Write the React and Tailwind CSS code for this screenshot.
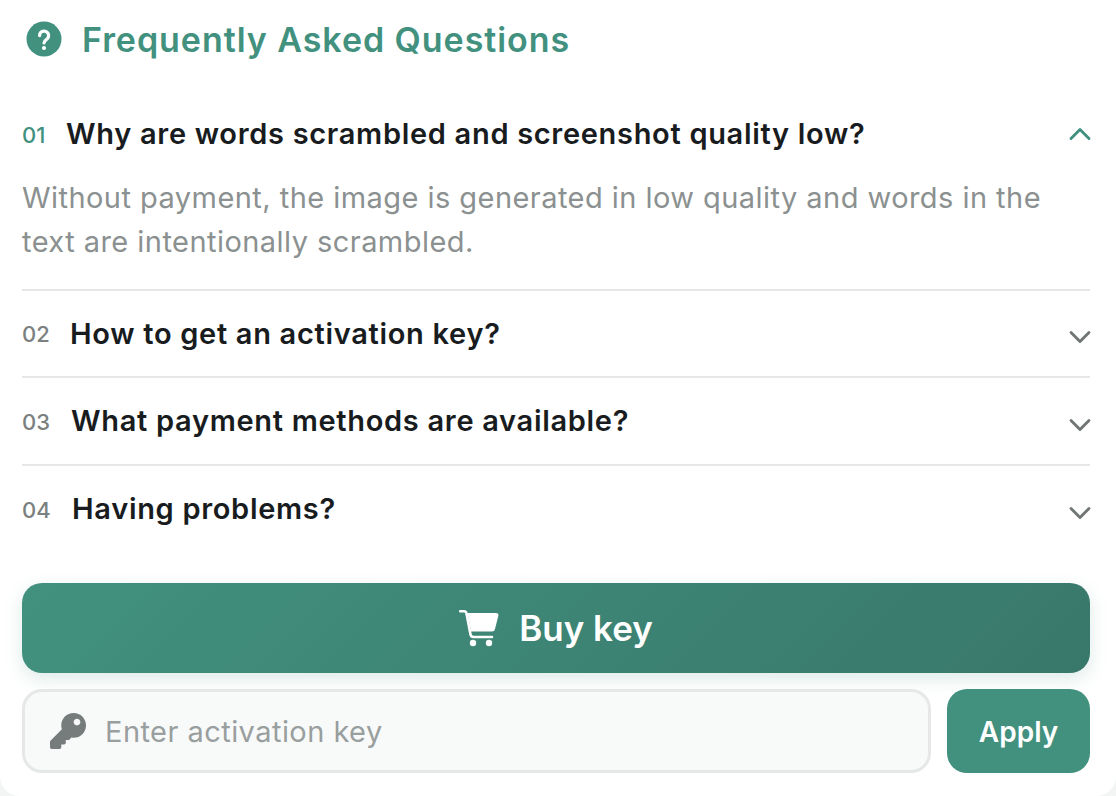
import React from 'react';
import { FaKey } from 'react-icons/fa';
import { LuChevronUp, LuChevronDown } from 'react-icons/lu';

const font = 'font-["Inter","Noto_Sans",sans-serif]';

const faqs = [
  { id: '02', question: 'How to get an activation key?', numWidth: 'w-[48px]', height: 'h-[87px]' },
  { id: '03', question: 'What payment methods are available?', numWidth: 'w-[49px]', height: 'h-[88px]' },
  { id: '04', question: 'Having problems?', numWidth: 'w-[50px]', height: 'h-[88px]' },
];

const QuestionIcon = () => (
  <svg className="w-[36px] h-[36px] flex-none" viewBox="0 0 36 36">
    <circle cx="18" cy="18" r="17.5" fill="#42917f" />
    <path
      d="M13.6 14.6a4.5 4.5 0 1 1 7 3.7c-1.6 1.1-2.6 2-2.6 3.6"
      fill="none"
      stroke="#fff"
      strokeWidth="3.2"
      strokeLinecap="round"
    />
    <circle cx="18" cy="27" r="2.1" fill="#fff" />
  </svg>
);

const CartIcon = () => (
  <svg className="w-[40px] h-[40px] flex-none" viewBox="0 0 40 40" fill="#fff">
    <path
      d="M1.2 3.2H5Q7 3.200 7.500 5.500L11.500 26.500Q12 29 14.500 29H33"
      fill="none"
      stroke="#fff"
      strokeWidth="2.6"
      strokeLinecap="round"
    />
    <path d="M8.500 5H37Q40 5 39.300 8L36 21Q35.500 23.500 33 23.500H12Z" />
    <circle cx="14" cy="35" r="3.200" />
    <circle cx="30" cy="35" r="3.200" />
  </svg>
);

const App = () => {
  return (
    <div className={`w-[1116px] h-[796px] bg-[#f3f5f5] overflow-hidden ${font}`}>
      <div className="h-full bg-white rounded-b-[20px] pl-[22px] pr-[26px] pt-[19px]">
        {/* Header */}
        <div className="flex items-center h-[40px] pl-[4px]">
          <QuestionIcon />
          <h2 className="ml-[20px] text-[34px] font-semibold tracking-[0.95px] text-[#42917f]">
            Frequently Asked Questions
          </h2>
        </div>

        {/* Open item */}
        <div className="mt-[41px] border-b-2 border-[#e6e8e8] h-[191px]">
          <div className="flex items-center h-[68px]">
            <span className="w-[44px] flex-none mt-[2px] text-[22px] font-medium text-[#42917f]">01</span>
            <span className="flex-1 text-[29px] font-semibold tracking-[0.69px] text-[#191c1e]">
              Why are words scrambled and screenshot quality low?
            </span>
            <LuChevronUp className="w-[36px] h-[36px] flex-none -mr-[8px] text-[#42917f]" strokeWidth={1.9} />
          </div>
          <p className="pt-[8px] text-[29px] leading-[44px] tracking-[0.45px] text-[#8b9090]">
            Without payment, the image is generated in low quality and words in the
            <br />
            text are intentionally scrambled.
          </p>
        </div>

        {/* Closed items */}
        {faqs.map((faq, i) => (
          <div
            key={faq.id}
            className={`flex items-center ${faq.height} ${i < faqs.length - 1 ? 'border-b-2 border-[#e6e8e8]' : 'pb-[2px]'}`}
          >
            <span className={`${faq.numWidth} flex-none mt-[2px] text-[22px] font-medium text-[#7b8080]`}>{faq.id}</span>
            <span className="flex-1 text-[29px] font-semibold tracking-[0.69px] text-[#191c1e]">
              {faq.question}
            </span>
            <LuChevronDown className="w-[36px] h-[36px] flex-none -mr-[8px] mt-[7px] text-[#707575]" strokeWidth={1.9} />
          </div>
        ))}

        {/* Buy button */}
        <button className="mt-[29px] w-full h-[90px] rounded-[20px] bg-[linear-gradient(135deg,#42917f,#38786b)] shadow-[0_6px_18px_rgba(66,145,127,0.18)] flex items-center justify-center gap-[20px] text-white">
          <CartIcon />
          <span className="text-[35px] font-semibold">Buy key</span>
        </button>

        {/* Activation key */}
        <div className="mt-[16px] flex gap-[16px] h-[84px]">
          <div className="flex-1 flex items-center rounded-[20px] border-[3px] border-[#e6e8e8] bg-[#f8fafa] pl-[25px]">
            <FaKey className="w-[36px] h-[36px] text-[#767b7b]" />
            <span className="ml-[19px] pt-[2px] text-[29px] tracking-[0.45px] text-[#999e9e]">Enter activation key</span>
          </div>
          <button className="w-[143px] pt-[2px] rounded-[20px] bg-[#42917f] text-white text-[28px] font-semibold">
            Apply
          </button>
        </div>
      </div>
    </div>
  );
};

export default App;
